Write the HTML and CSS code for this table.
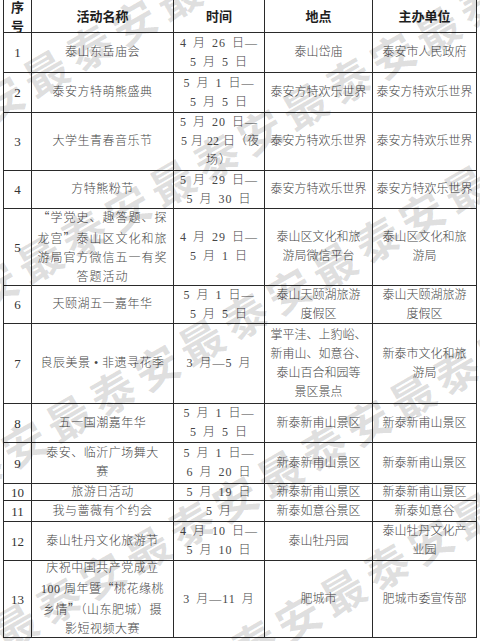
FILE: index.html
```html
<!DOCTYPE html>
<html lang="zh-CN">
<head>
<meta charset="utf-8">
<title>五一活动一览</title>
<link rel="stylesheet" href="styles.css">
</head>
<body>
<div class="page">
  <div class="grid">
    <div class="c h">序<br>号</div>
    <div class="c h">活动名称</div>
    <div class="c h">时间</div>
    <div class="c h">地点</div>
    <div class="c h">主办单位</div>

    <div class="c n">1</div>
    <div class="c a">泰山东岳庙会</div>
    <div class="c t">4 月 26 日—<br>5 月 5 日</div>
    <div class="c p">泰山岱庙</div>
    <div class="c p">泰安市人民政府</div>

    <div class="c n">2</div>
    <div class="c a">泰安方特萌熊盛典</div>
    <div class="c t">5 月 1 日—<br>5 月 5 日</div>
    <div class="c p">泰安方特欢乐世界</div>
    <div class="c p">泰安方特欢乐世界</div>

    <div class="c n">3</div>
    <div class="c a">大学生青春音乐节</div>
    <div class="c t"><span class="in">5 月 20 日—<br><span class="fit">5 月 22 日（夜</span><br>场）</span></div>
    <div class="c p">泰安方特欢乐世界</div>
    <div class="c p">泰安方特欢乐世界</div>

    <div class="c n">4</div>
    <div class="c a">方特熊粉节</div>
    <div class="c t">5 月 29 日—<br>5 月 30 日</div>
    <div class="c p">泰安方特欢乐世界</div>
    <div class="c p">泰安方特欢乐世界</div>

    <div class="c n">5</div>
    <div class="c a wide"><span class="in"><span class="q">“</span>学党史、趣答题、探<br>龙宫<span class="q">”</span>泰山区文化和旅<br>游局官方微信五一有奖<br>答题活动</span></div>
    <div class="c t">4 月 29 日—<br>5 月 1 日</div>
    <div class="c p">泰山区文化和旅<br>游局微信平台</div>
    <div class="c p">泰山区文化和旅<br>游局</div>

    <div class="c n">6</div>
    <div class="c a">天颐湖五一嘉年华</div>
    <div class="c t">5 月 1 日—<br>5 月 5 日</div>
    <div class="c p">泰山天颐湖旅游<br>度假区</div>
    <div class="c p">泰山天颐湖旅游<br>度假区</div>

    <div class="c n">7</div>
    <div class="c a">良辰美景 • 非遗寻花季</div>
    <div class="c t">3 月—5 月</div>
    <div class="c p">掌平洼、上豹峪、<br>新甫山、如意谷、<br>泰山百合和园等<br>景区景点</div>
    <div class="c p">新泰市文化和旅<br>游局</div>

    <div class="c n">8</div>
    <div class="c a">五一国潮嘉年华</div>
    <div class="c t">5 月 1 日—<br>5 月 5 日</div>
    <div class="c p">新泰新甫山景区</div>
    <div class="c p">新泰新甫山景区</div>

    <div class="c n">9</div>
    <div class="c a">泰安、临沂广场舞大<br>赛</div>
    <div class="c t">5 月 1 日—<br>6 月 20 日</div>
    <div class="c p">新泰新甫山景区</div>
    <div class="c p">新泰新甫山景区</div>

    <div class="c n tight">10</div>
    <div class="c a tight">旅游日活动</div>
    <div class="c t tight">5 月 19 日</div>
    <div class="c p tight">新泰新甫山景区</div>
    <div class="c p tight">新泰新甫山景区</div>

    <div class="c n">11</div>
    <div class="c a">我与蔷薇有个约会</div>
    <div class="c t">5 月</div>
    <div class="c p">新泰如意谷景区</div>
    <div class="c p">新泰如意谷</div>

    <div class="c n">12</div>
    <div class="c a">泰山牡丹文化旅游节</div>
    <div class="c t">4 月 10 日—<br>5 月 10 日</div>
    <div class="c p">泰山牡丹园</div>
    <div class="c p">泰山牡丹文化产<br>业园</div>

    <div class="c n">13</div>
    <div class="c a"><span class="in">庆祝中国共产党成立<br>100 周年暨<span class="q">“</span>桃花缘桃<br>乡情<span class="q">”</span>（山东肥城）摄<br>影短视频大赛</span></div>
    <div class="c t">3 月—11 月</div>
    <div class="c p">肥城市</div>
    <div class="c p">肥城市委宣传部</div>
  </div>

  <div class="wm" aria-hidden="true">
    <div class="wl wl1">最泰安最泰安最泰安最泰安最泰安最泰安</div>
    <div class="wl wl2">最泰安最泰安最泰安最泰安最泰安最泰安</div>
    <div class="wl wl3">最泰安最泰安最泰安最泰安最泰安最泰安</div>
    <div class="wl wl4">最泰安最泰安最泰安最泰安最泰安最泰安</div>
    <div class="wl wl5">最泰安最泰安最泰安最泰安最泰安最泰安</div>
  </div>
</div>
</body>
</html>
```

FILE: styles.css
```css
html, body {
  margin: 0;
  padding: 0;
  background: #ffffff;
}

.page {
  position: relative;
  width: 480px;
  height: 641px;
  overflow: hidden;
  background: #ffffff;
}

.grid {
  display: grid;
  grid-template-columns: 28px 142px 91px 108px 104px;
  grid-template-rows: 34px 40px 40px 58px 38px 77px 38px 80px 39px 41px 17px 21px 39px 77px;
  width: 474px;
  margin: -2px 0 0 3px;
  border-left: 1px solid #2a2a2a;
  border-top: 1px solid #2a2a2a;
  box-sizing: border-box;
  font-family: "Liberation Serif", "Noto Sans CJK SC", serif;
  font-size: 12px;
  font-weight: 300;
  line-height: 19px;
  color: #474747;
}

.c {
  display: flex;
  align-items: center;
  justify-content: center;
  text-align: center;
  border-right: 1px solid #2a2a2a;
  border-bottom: 1px solid #2a2a2a;
  box-sizing: border-box;
  overflow: hidden;
  white-space: nowrap;
}

.in {
  display: block;
  text-align: center;
}

.h {
  font-family: "Noto Sans CJK SC", sans-serif;
  font-weight: 700;
  font-size: 13px;
  line-height: 19px;
  color: #1e1e1e;
}

.n {
  font-size: 13px;
  color: #333333;
}

.a {
  letter-spacing: 0.5px;
}

.t {
  letter-spacing: 1px;
  word-spacing: 2px;
}

.fit {
  letter-spacing: 0;
  word-spacing: 1px;
  margin-left: 2px;
}

.p {
  letter-spacing: 0;
}

.wide {
  letter-spacing: 1px;
}

.q {
  font-family: "Noto Sans CJK SC", sans-serif;
}

.tight {
  line-height: 15px;
}

.wm {
  position: absolute;
  left: 0;
  top: 0;
  width: 480px;
  height: 641px;
  pointer-events: none;
}

.wl {
  position: absolute;
  height: 44px;
  line-height: 44px;
  font-family: "Noto Sans CJK SC", sans-serif;
  font-weight: 700;
  font-size: 44px;
  letter-spacing: 7px;
  white-space: nowrap;
  color: rgba(0, 0, 0, 0.13);
  transform-origin: 0 50%;
  transform: rotate(-30deg);
}

.wl1 { left: -107px; top: 137px; }
.wl2 { left: -113px; top: 323px; }
.wl3 { left: -84px; top: 482px; }
.wl4 { left: -138px; top: 690px; }
.wl5 { left: -75px; top: 809px; }
```
